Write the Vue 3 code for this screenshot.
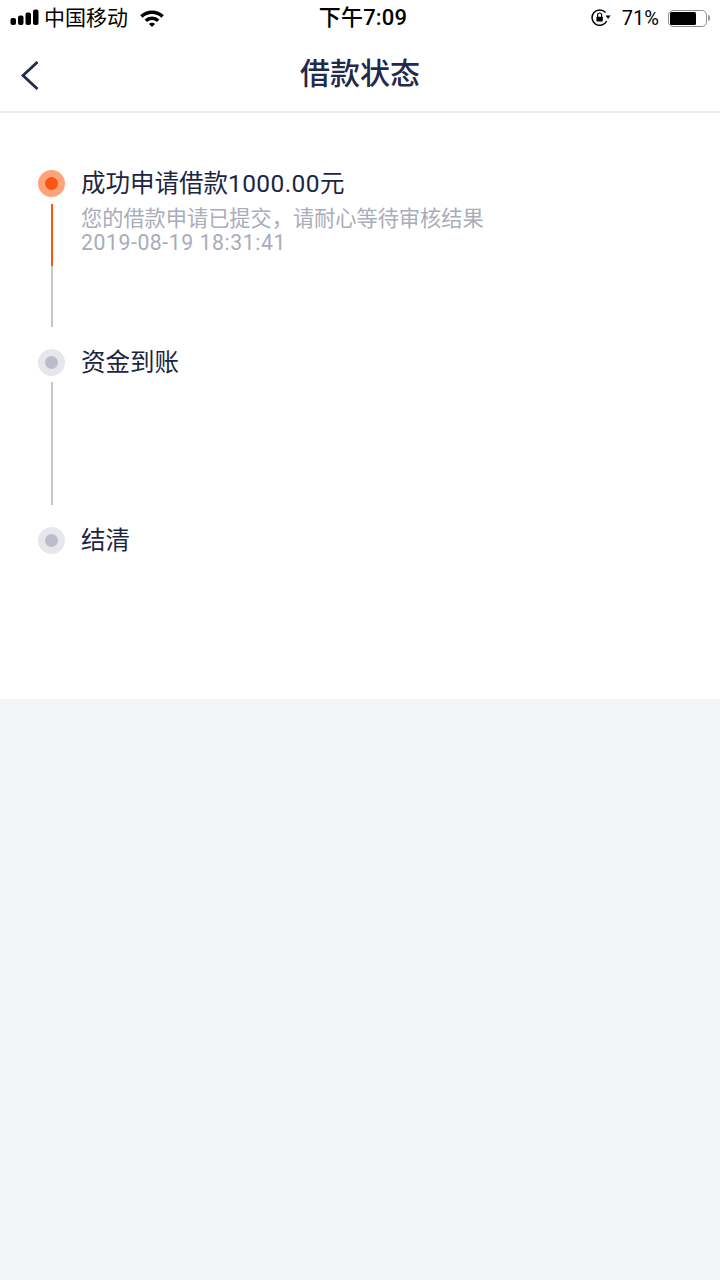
<script setup>
const steps = [
  { title: '成功申请借款', amount: '1000.00', unit: '元', active: true, desc: '您的借款申请已提交，请耐心等待审核结果', time: '2019-08-19 18:31:41', line: true },
  { title: '资金到账', active: false, line: true },
  { title: '结清', active: false, line: false },
]
</script>

<template>
  <div class="page">
    <div class="top">
      <div class="status">
        <div class="st-left">
          <svg class="signal" width="30" height="18" viewBox="0 0 30 18">
            <rect x="0.5" y="9" width="5.5" height="7" rx="2" fill="#000" />
            <rect x="8" y="6.5" width="5.5" height="9.5" rx="2" fill="#000" />
            <rect x="15.5" y="3.5" width="5.5" height="12.5" rx="2" fill="#000" />
            <rect x="23" y="0.5" width="5.5" height="15.5" rx="2" fill="#000" />
          </svg>
          <span class="carrier">中国移动</span>
          <svg class="wifi" width="26" height="18" viewBox="0 0 26 18">
            <path d="M1.2 6.2 A17 17 0 0 1 24.8 6.2 L22.4 8.7 A13.6 13.6 0 0 0 3.6 8.7 Z" fill="#000" />
            <path d="M5.6 10.6 A10.6 10.6 0 0 1 20.4 10.6 L18 13 A7.2 7.2 0 0 0 8 13 Z" fill="#000" />
            <path d="M10 15 A4.2 4.2 0 0 1 16 15 L13 18 Z" fill="#000" />
          </svg>
        </div>
        <div class="st-time">下午7:09</div>
        <div class="st-right">
          <svg class="lock" width="20" height="20" viewBox="0 0 20 20">
            <path d="M15.7 13 A7.7 7.7 0 1 1 14.6 4.6" fill="none" stroke="#000" stroke-width="1.5" />
            <path d="M14.6 7.6 L19.6 7.6 L17.1 11 Z" fill="#000" />
            <rect x="5.4" y="8.8" width="6.4" height="4.8" rx="0.8" fill="#000" />
            <path d="M6.6 9 V7 A2 2 0 0 1 10.6 7 V9" fill="none" stroke="#000" stroke-width="1.2" />
          </svg>
          <span class="pct">71%</span>
          <div class="battery"><div class="fill"></div></div>
          <div class="nub"></div>
        </div>
      </div>
      <div class="nav">
        <svg class="back" width="20" height="32" viewBox="0 0 20 32">
          <path d="M17.5 2 L3 15.5 L17.5 29" fill="none" stroke="#1f2a4d" stroke-width="2.8" />
        </svg>
        <h1 class="title">借款状态</h1>
      </div>
    </div>

    <div class="panel">
      <div v-for="(s, i) in steps" :key="i" class="step">
        <div class="rail">
          <div class="dot" :class="{ on: s.active }"><span></span></div>
          <div v-if="s.line" class="line">
            <i v-if="s.active" class="line-on"></i>
          </div>
        </div>
        <div class="body">
          <div class="name">{{ s.title }}<span v-if="s.amount" class="num">{{ s.amount }}</span>{{ s.unit }}</div>
          <div v-if="s.desc" class="desc">{{ s.desc }}</div>
          <div v-if="s.time" class="desc time">{{ s.time }}</div>
        </div>
      </div>
    </div>
  </div>
</template>

<style>
html, body { margin: 0; background: #f4f5f7; }
</style>

<style scoped>
.page {
  width: 720px;
  height: 1280px;
  background: #f4f5f7;
  font-family: Roboto, "Noto Sans CJK SC", sans-serif;
  overflow: hidden;
}
.top {
  background: #fff;
  border-bottom: 2px solid #e9eaec;
  height: 111px;
}
.status {
  height: 36px;
  display: flex;
  align-items: center;
  justify-content: space-between;
  padding: 0 10px;
  position: relative;
  color: #000;
}
.st-left { display: flex; align-items: center; }
.signal { display: block; }
.carrier { font-size: 21px; margin-left: 4px; line-height: 36px; }
.wifi { margin-left: 11px; }
.st-time {
  position: absolute;
  left: 0;
  right: 0;
  top: 0;
  line-height: 36px;
  text-align: center;
  font-size: 22px;
  font-weight: 500;
  letter-spacing: 0.2px;
  pointer-events: none;
  transform: translateX(3px);
}
.st-right { display: flex; align-items: center; }
.lock { display: block; margin-top: -1px; }
.pct { font-size: 20px; margin-left: 11px; }
.battery {
  width: 35px;
  height: 13px;
  margin-left: 9px;
  border: 1.5px solid #8e8e8e;
  border-radius: 5px;
  padding: 1px;
  box-sizing: content-box;
}
.fill { width: 26px; height: 13px; background: #000; border-radius: 1.5px; }
.nub { width: 2px; height: 6px; background: #999; margin-left: 1px; border-radius: 0 2px 2px 0; }
.nav {
  height: 75px;
  display: flex;
  align-items: center;
  justify-content: center;
  position: relative;
}
.back { position: absolute; left: 20px; top: 24px; }
.title {
  margin: 0;
  font-size: 30px;
  font-weight: 500;
  color: #1f2a4d;
  margin-top: -6px;
}
.panel {
  background: #fff;
  height: 586px;
  padding-top: 57px;
  box-sizing: border-box;
}
.step { display: flex; height: 178.5px; padding-left: 38px; }
.rail { width: 27px; display: flex; flex-direction: column; align-items: center; }
.dot {
  width: 27px;
  height: 27px;
  border-radius: 50%;
  background: #e6e7ec;
  display: flex;
  align-items: center;
  justify-content: center;
  flex: none;
}
.dot span { width: 13px; height: 13px; border-radius: 50%; background: #b9bcc9; }
.dot.on { background: #ffa37a; }
.dot.on span { background: #fb5510; }
.line {
  width: 2px;
  height: 123px;
  margin-top: 6.5px;
  background: #c3c5d0;
}
.line-on {
  display: block;
  width: 2px;
  height: 62px;
  background: #fb5510;
}
.body { margin-left: 16px; }
.name {
  font-size: 24.5px;
  line-height: 27px;
  color: #1c2542;
}
.num { letter-spacing: 0.4px; }
.desc {
  font-size: 21.2px;
  line-height: 24px;
  color: #a9acb9;
  margin-top: 10px;
}
.time { margin-top: 0; letter-spacing: 0.58px; }
</style>
